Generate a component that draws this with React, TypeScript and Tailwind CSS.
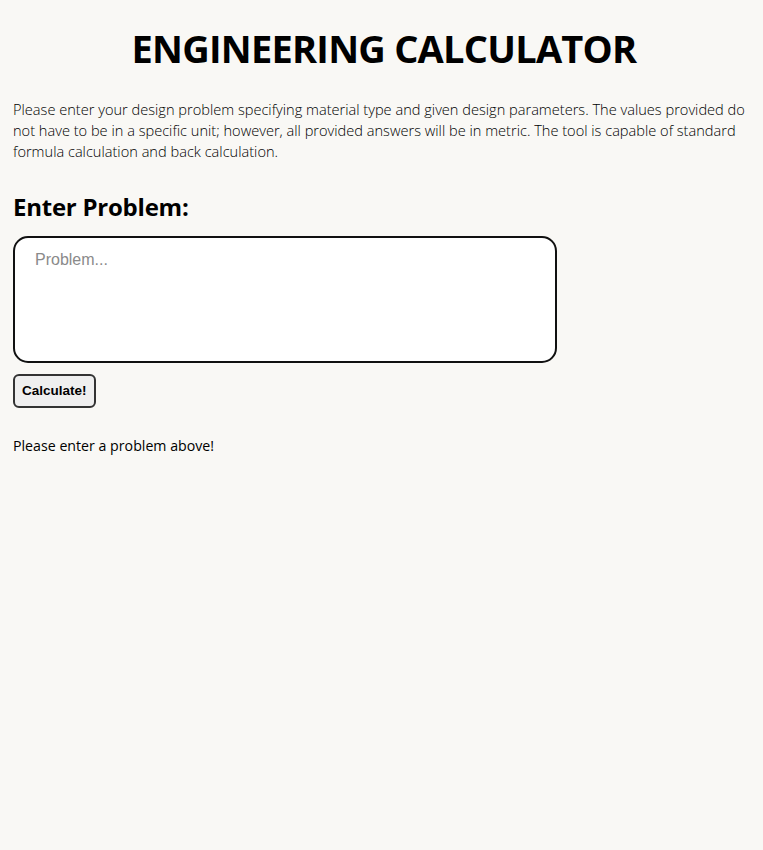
import React, { useState } from 'react';

export default function App() {
  const [problem, setProblem] = useState('');
  const [result, setResult] = useState('Please enter a problem above!');

  return (
    <div className="min-h-[850px] bg-[#f9f8f5] text-black font-['Open_Sans',sans-serif] pl-[13px] pr-[8px] pt-[25px]">
      <h1 className="text-center text-[38px] font-bold leading-[46px] tracking-[-0.02em]">
        ENGINEERING CALCULATOR
      </h1>
      <p className="mt-[28px] text-[14.6px] font-light leading-[21px] text-black">
        Please enter your design problem specifying material type and given design parameters. The values provided do
        not have to be in a specific unit; however, all provided answers will be in metric. The tool is capable of standard
        formula calculation and back calculation.
      </p>
      <h2 className="mt-[29px] text-[24px] font-bold leading-[32px] tracking-[-0.01em]">Enter Problem:</h2>
      <textarea
        value={problem}
        onChange={(e) => setProblem(e.target.value)}
        placeholder="Problem..."
        className="mt-[13px] block w-[544px] h-[127px] resize-none rounded-[15px] border-2 border-[#111] bg-white px-[20px] py-[10px] font-['Liberation_Sans',sans-serif] text-[16px] placeholder:text-[#8a8a8a] outline-none"
      />
      <button
        onClick={() => setResult(problem ? 'Calculating...' : 'Please enter a problem above!')}
        className="mt-[11px] block h-[34px] px-[7px] rounded-[6px] border-2 border-[#333] bg-[#efefef] font-['Liberation_Sans',sans-serif] text-[13.5px] font-bold"
      >
        Calculate!
      </button>
      <p className="mt-[27px] text-[14.2px] leading-[21px]">{result}</p>
    </div>
  );
}
